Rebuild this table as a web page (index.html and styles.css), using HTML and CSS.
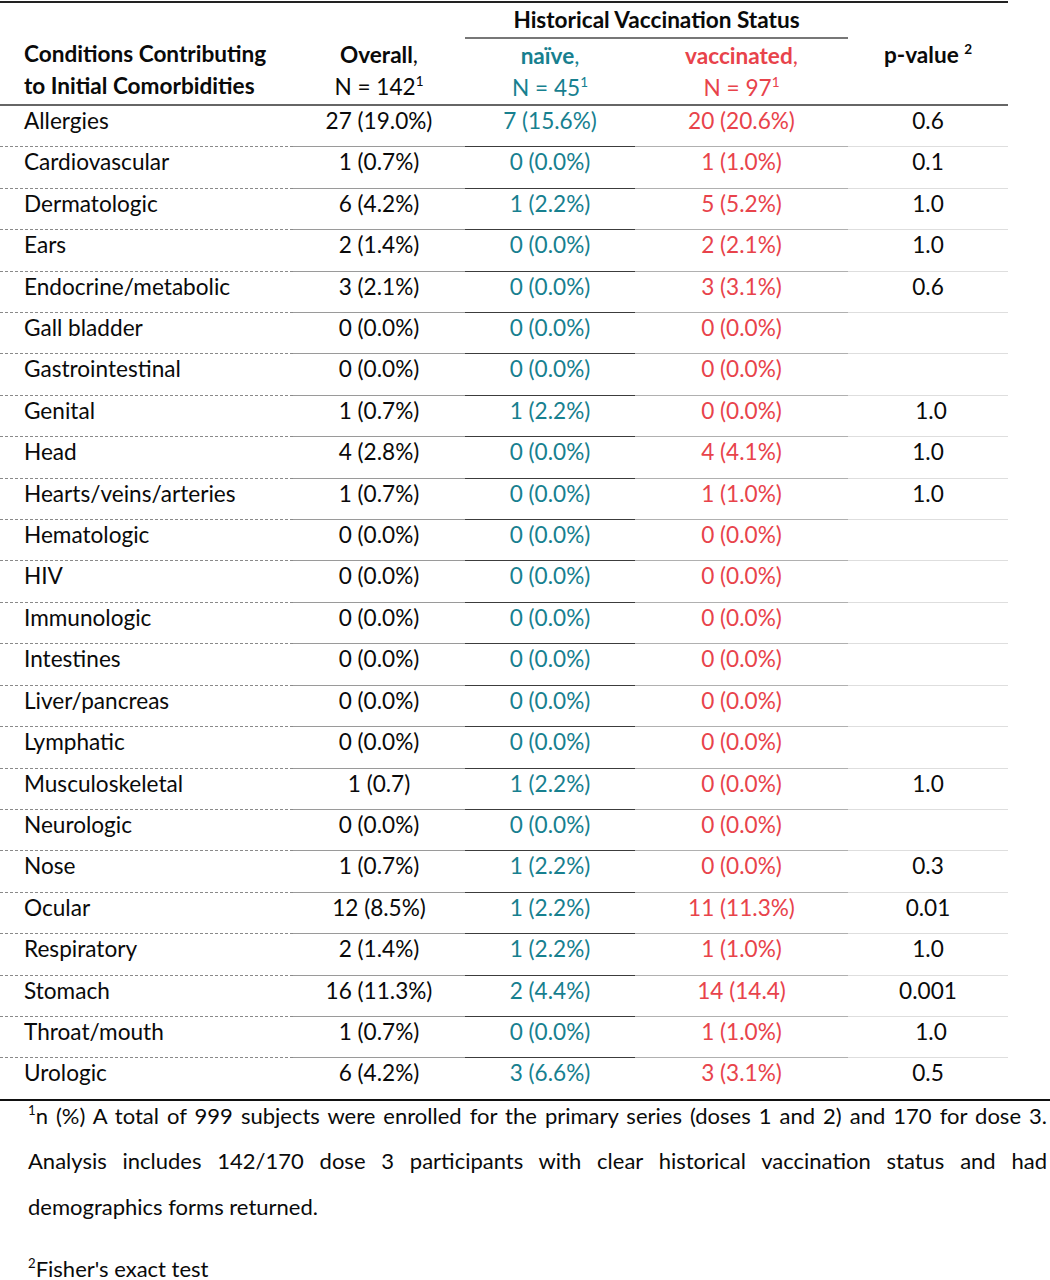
FILE: index.html
```html
<!DOCTYPE html>
<html>

<head>
  <meta charset="UTF-8">
  <title>Initial Comorbidities</title>
  <link rel="stylesheet" href="styles.css">
</head>

<body>
  <table class="comorb">
    <colgroup>
      <col class="c-label">
      <col class="c-overall">
      <col class="c-naive">
      <col class="c-vacc">
      <col class="c-p">
    </colgroup>
    <thead>
      <tr class="head-top">
        <th></th>
        <th></th>
        <th colspan="2" class="span-head">Historical Vaccination Status</th>
        <th></th>
      </tr>
      <tr class="head-main">
        <th class="label">Conditions Contributing<br>to Initial Comorbidities</th>
        <th>Overall<span class="thin">,</span><br><span class="thin">N = 142<sup>1</sup></span></th>
        <th class="naive">naïve<span class="thin">,</span><br><span class="thin">N = 45<sup>1</sup></span></th>
        <th class="vacc">vaccinated<span class="thin">,</span><br><span class="thin">N = 97<sup>1</sup></span></th>
        <th class="pval">p-value <sup>2</sup><br>&nbsp;</th>
      </tr>
    </thead>
    <tbody>
      <tr><td>Allergies</td><td>27 (19.0%)</td><td>7 (15.6%)</td><td>20 (20.6%)</td><td>0.6</td></tr>
      <tr><td>Cardiovascular</td><td>1 (0.7%)</td><td>0 (0.0%)</td><td>1 (1.0%)</td><td>0.1</td></tr>
      <tr><td>Dermatologic</td><td>6 (4.2%)</td><td>1 (2.2%)</td><td>5 (5.2%)</td><td>1.0</td></tr>
      <tr><td>Ears</td><td>2 (1.4%)</td><td>0 (0.0%)</td><td>2 (2.1%)</td><td>1.0</td></tr>
      <tr><td>Endocrine/metabolic</td><td>3 (2.1%)</td><td>0 (0.0%)</td><td>3 (3.1%)</td><td>0.6</td></tr>
      <tr><td>Gall bladder</td><td>0 (0.0%)</td><td>0 (0.0%)</td><td>0 (0.0%)</td><td></td></tr>
      <tr><td>Gastrointestinal</td><td>0 (0.0%)</td><td>0 (0.0%)</td><td>0 (0.0%)</td><td></td></tr>
      <tr><td>Genital</td><td>1 (0.7%)</td><td>1 (2.2%)</td><td>0 (0.0%)</td><td class="nudge">1.0</td></tr>
      <tr><td>Head</td><td>4 (2.8%)</td><td>0 (0.0%)</td><td>4 (4.1%)</td><td>1.0</td></tr>
      <tr><td>Hearts/veins/arteries</td><td>1 (0.7%)</td><td>0 (0.0%)</td><td>1 (1.0%)</td><td>1.0</td></tr>
      <tr><td>Hematologic</td><td>0 (0.0%)</td><td>0 (0.0%)</td><td>0 (0.0%)</td><td></td></tr>
      <tr><td>HIV</td><td>0 (0.0%)</td><td>0 (0.0%)</td><td>0 (0.0%)</td><td></td></tr>
      <tr><td>Immunologic</td><td>0 (0.0%)</td><td>0 (0.0%)</td><td>0 (0.0%)</td><td></td></tr>
      <tr><td>Intestines</td><td>0 (0.0%)</td><td>0 (0.0%)</td><td>0 (0.0%)</td><td></td></tr>
      <tr><td>Liver/pancreas</td><td>0 (0.0%)</td><td>0 (0.0%)</td><td>0 (0.0%)</td><td></td></tr>
      <tr><td>Lymphatic</td><td>0 (0.0%)</td><td>0 (0.0%)</td><td>0 (0.0%)</td><td></td></tr>
      <tr><td>Musculoskeletal</td><td>1 (0.7)</td><td>1 (2.2%)</td><td>0 (0.0%)</td><td>1.0</td></tr>
      <tr><td>Neurologic</td><td>0 (0.0%)</td><td>0 (0.0%)</td><td>0 (0.0%)</td><td></td></tr>
      <tr><td>Nose</td><td>1 (0.7%)</td><td>1 (2.2%)</td><td>0 (0.0%)</td><td>0.3</td></tr>
      <tr><td>Ocular</td><td>12 (8.5%)</td><td>1 (2.2%)</td><td>11 (11.3%)</td><td>0.01</td></tr>
      <tr><td>Respiratory</td><td>2 (1.4%)</td><td>1 (2.2%)</td><td>1 (1.0%)</td><td>1.0</td></tr>
      <tr><td>Stomach</td><td>16 (11.3%)</td><td>2 (4.4%)</td><td>14 (14.4)</td><td>0.001</td></tr>
      <tr><td>Throat/mouth</td><td>1 (0.7%)</td><td>0 (0.0%)</td><td>1 (1.0%)</td><td class="nudge">1.0</td></tr>
      <tr><td>Urologic</td><td>6 (4.2%)</td><td>3 (6.6%)</td><td>3 (3.1%)</td><td>0.5</td></tr>
    </tbody>
  </table>
  <div class="notes">
    <p class="note-main"><sup>1</sup>n (%) A total of 999 subjects were enrolled for the primary series (doses 1 and 2) and 170 for dose 3. Analysis includes 142/170 dose 3 participants with clear historical vaccination status and had demographics forms returned.</p>
    <p class="note-test"><sup>2</sup>Fisher's exact test</p>
  </div>
</body>

</html>
```
FILE: styles.css
```css
html,
body {
  margin: 0;
  background: #fff;
}

body {
  font-family: Lato, "Open Sans", "Liberation Sans", sans-serif;
  font-size: 22px;
  color: #0a0a0a;
}

sup {
  font-size: 0.6em;
  line-height: 0;
  vertical-align: 0.7em;
}

.comorb {
  width: 1008px;
  table-layout: fixed;
  border-collapse: collapse;
  margin-top: 1px;
  border-top: 2px solid #222;
  font-size: 22.6px;
}

.c-label { width: 293px; }
.c-overall { width: 172px; }
.c-naive { width: 170px; }
.c-vacc { width: 213px; }
.c-p { width: 160px; }

.comorb th,
.comorb td {
  padding: 0;
  text-align: center;
  white-space: nowrap;
}

.head-top th {
  height: 34px;
  line-height: 32px;
  font-weight: 700;
}

.span-head {
  border-bottom: 2px solid #777;
}

.head-main th {
  height: 64px;
  line-height: 32px;
  vertical-align: top;
  font-weight: 700;
  border-bottom: 2px solid #666;
}

.head-main th.label {
  text-align: left;
  padding-left: 24px;
}

.head-main th:not(.label) {
  padding-top: 1px;
}

.thin {
  font-weight: 400;
}

.naive {
  color: #17808f;
}

.vacc {
  color: #e8434b;
}

.comorb tbody td {
  height: 40.42px;
  line-height: 30px;
  vertical-align: top;
  border-top: 1px solid #999;
}

.comorb tbody tr:first-child td {
  border-top: none;
}

.comorb tbody td:nth-child(1) {
  text-align: left;
  padding-left: 24px;
  border-top: 1px dashed #8a8a8a;
}

.comorb tbody td:nth-child(2) {
  border-top-color: #9a9a9a;
}

.comorb tbody td:nth-child(3) {
  color: #17808f;
  border-top-color: #3c3c3c;
}

.comorb tbody td:nth-child(4) {
  color: #e8434b;
  border-top-color: #b0b0b0;
}

.comorb tbody td:nth-child(5) {
  border-top-color: #dedede;
}

.comorb tbody td.nudge {
  padding-left: 6px;
}

.notes {
  width: 1050px;
  border-top: 2px solid #111;
  box-sizing: border-box;
  padding: 0 3px 0 28px;
}

.notes p {
  margin: 0;
  line-height: 45.5px;
}

.note-main {
  text-align: justify;
  margin-top: -8px !important;
}

.note-test {
  line-height: 30px !important;
  margin-top: 25px !important;
}
```
